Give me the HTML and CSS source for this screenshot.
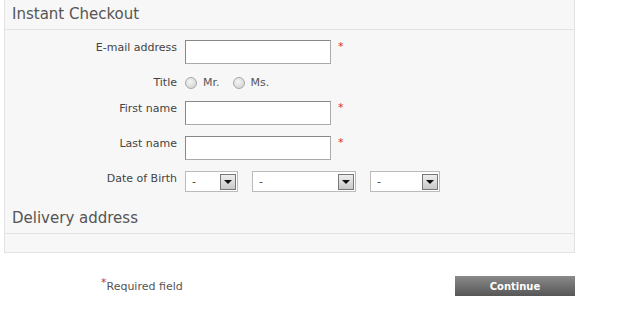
FILE: index.html
```html
<!DOCTYPE html>
<html lang="en">
<head>
    <meta charset="UTF-8">
    <title>Instant Checkout</title>
    <link rel="stylesheet" href="styles.css">
</head>
<body>
    <div class="panel">
        <h2 class="panel-title">Instant Checkout</h2>
        <div class="form">
            <div class="row">
                <label class="label">E-mail address</label>
                <input type="text" class="text-input">
                <span class="req">*</span>
            </div>
            <div class="row row-title">
                <label class="label">Title</label>
                <label class="radio"><input type="radio" name="title"> Mr.</label>
                <label class="radio"><input type="radio" name="title"> Ms.</label>
            </div>
            <div class="row">
                <label class="label">First name</label>
                <input type="text" class="text-input">
                <span class="req">*</span>
            </div>
            <div class="row">
                <label class="label">Last name</label>
                <input type="text" class="text-input">
                <span class="req">*</span>
            </div>
            <div class="row">
                <label class="label">Date of Birth</label>
                <div class="selects">
                    <div class="select select-day"><span>-</span><span class="arrow"></span></div>
                    <div class="select select-month"><span>-</span><span class="arrow"></span></div>
                    <div class="select select-year"><span>-</span><span class="arrow"></span></div>
                </div>
            </div>
        </div>
        <h2 class="panel-title sub-title">Delivery address</h2>
        <div class="panel-body"></div>
    </div>

    <div class="footer">
        <p class="note"><span class="req-sup">*</span>Required field</p>
        <button class="continue-btn">Continue</button>
    </div>
</body>
</html>
```

FILE: styles.css
```css
body {
    margin: 0;
    font-family: "DejaVu Sans", Verdana, sans-serif;
    font-size: 11px;
    color: #444;
    background: #fff;
}
.panel {
    margin-left: 4px;
    width: 569px;
    background: #f7f7f7;
    border: 1px solid #e3e3e3;
    border-top: none;
}
.panel-title {
    margin: 0;
    height: 29px;
    line-height: 28px;
    padding-left: 7px;
    font-size: 15px;
    font-weight: normal;
    color: #555;
    border-bottom: 1px solid #e3e3e3;
}
.sub-title {
    margin-top: 12px;
    height: 29px;
    line-height: 28px;
}
.panel-body {
    height: 18px;
}
.form {
    display: flex;
    flex-direction: column;
    gap: 11px;
    padding-top: 10px;
}
.row {
    display: flex;
    align-items: flex-start;
}
.label {
    width: 172px;
    padding-right: 8px;
    text-align: right;
    line-height: 14px;
    padding-top: 1px;
}
.row-title {
    height: 15px;
    align-items: center;
}
.row-title .label {
    padding-top: 0;
}
.text-input {
    width: 140px;
    height: 20px;
    margin: 0;
    padding: 1px 2px;
    border: 1px solid #aaa;
    border-top-color: #888;
    border-left-color: #888;
    background: #fff;
    font: inherit;
}
.req {
    color: #cc3333;
    margin-left: 7px;
    line-height: 14px;
}
.radio {
    display: flex;
    align-items: center;
    margin-right: 13px;
    color: #555;
}
.radio input {
    appearance: none;
    width: 12px;
    height: 12px;
    margin: 0 6px 0 0;
    border: 1px solid #a8a8a8;
    border-radius: 50%;
    background: radial-gradient(circle at 40% 35%, #f4f4f4, #cfcfcf);
}
.selects {
    display: flex;
    gap: 14px;
}
.select {
    display: flex;
    align-items: center;
    justify-content: space-between;
    height: 19px;
    padding: 0 1px 0 6px;
    border: 1px solid #bbb;
    background: #fff;
}
.select-day {
    width: 44px;
}
.select-month {
    width: 95px;
}
.select-year {
    width: 61px;
}
.arrow {
    position: relative;
    width: 14px;
    height: 14px;
    border: 1px solid #777;
    background: linear-gradient(#eee, #c8c8c8);
}
.arrow::after {
    content: "";
    position: absolute;
    left: 3px;
    top: 5px;
    border-left: 4px solid transparent;
    border-right: 4px solid transparent;
    border-top: 4px solid #111;
}
.footer {
    display: flex;
    justify-content: space-between;
    align-items: flex-start;
    margin-top: 23px;
    padding-left: 101px;
    width: 474px;
}
.note {
    margin: 4px 0 0;
    color: #555;
}
.req-sup {
    color: #cc3333;
    position: relative;
    top: -4px;
}
.continue-btn {
    width: 120px;
    height: 20px;
    padding: 0;
    border: none;
    background: linear-gradient(#8a8a8a, #565656);
    color: #fff;
    font-family: "DejaVu Sans", Verdana, sans-serif;
    font-size: 10px;
    font-weight: bold;
}
```
